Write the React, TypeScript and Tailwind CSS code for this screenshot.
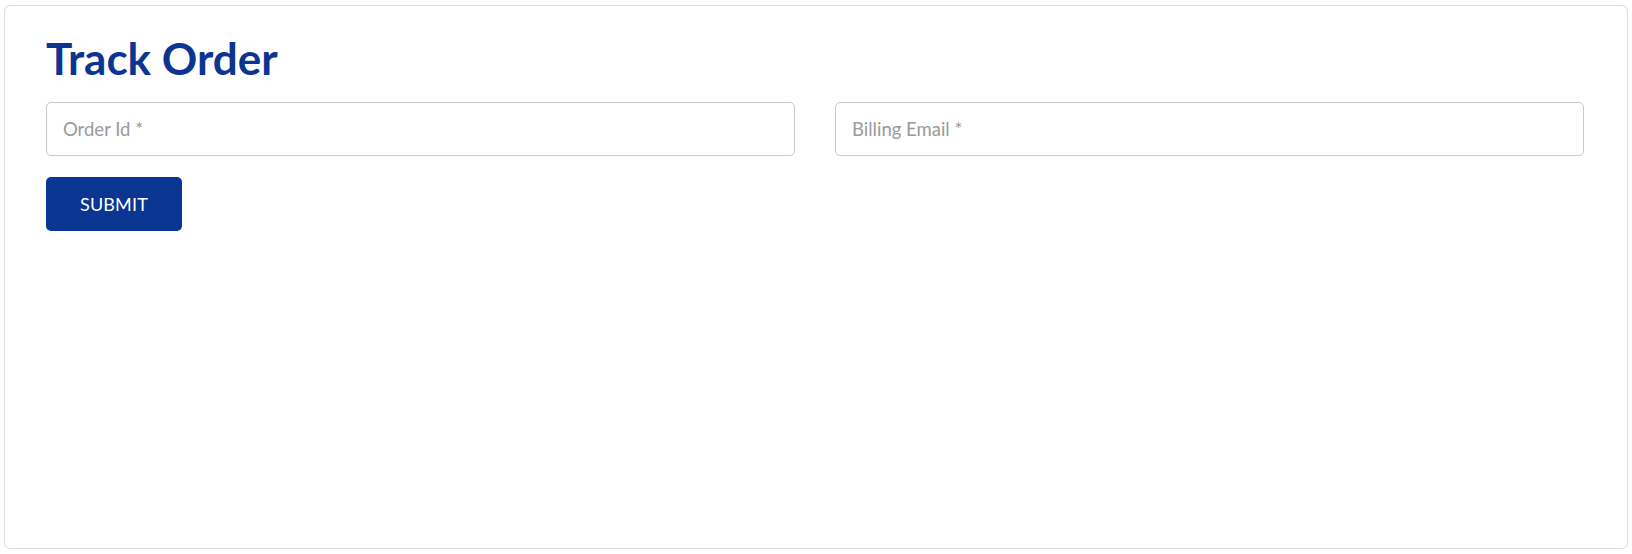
export default function App() {
  return (
    <div className="min-h-screen bg-white px-1 py-[5px] font-['Lato','Liberation_Sans',sans-serif]">
      <div className="h-[544px] rounded-md border border-[#dcdcdc] bg-white pl-[41px] pr-[43px] pt-[26px]">
        <h1 className="text-[44px] font-bold leading-[1.2] text-[#0b3590]">
          Track Order
        </h1>
        <form
          className="mt-[17px]"
          onSubmit={(event) => event.preventDefault()}
        >
          <div className="grid grid-cols-2 gap-[40px]">
            <input
              type="text"
              placeholder="Order Id *"
              className="h-[54px] w-full rounded-[5px] border border-[#cacaca] bg-white px-4 text-[18.5px] text-[#333] outline-none placeholder:text-[#9a9a9a]"
            />
            <input
              type="email"
              placeholder="Billing Email *"
              className="h-[54px] w-full rounded-[5px] border border-[#cacaca] bg-white px-4 text-[18.5px] text-[#333] outline-none placeholder:text-[#9a9a9a]"
            />
          </div>
          <button
            type="submit"
            className="mt-[21px] h-[54px] w-[136px] rounded-[5px] bg-[#0a3590] pt-px text-[18px] tracking-[0.01em] text-white"
          >
            SUBMIT
          </button>
        </form>
      </div>
    </div>
  );
}
